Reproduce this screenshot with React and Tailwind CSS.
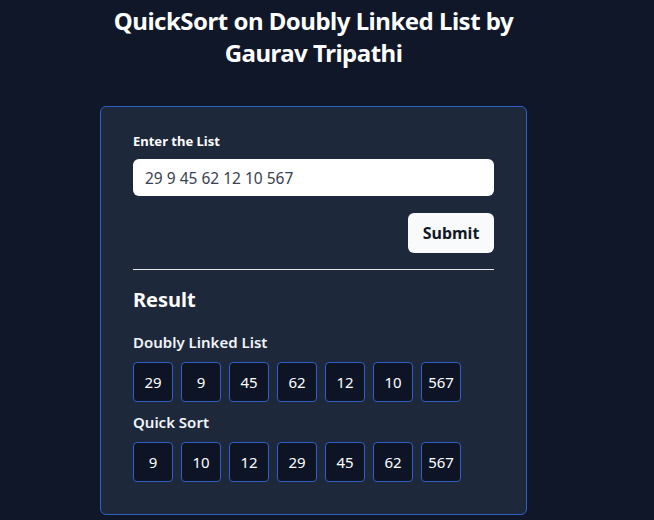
const ORIGINAL = [29, 9, 45, 62, 12, 10, 567];
const SORTED = [...ORIGINAL].sort((a, b) => a - b);

function NodeRow({ values }) {
  return (
    <div className="flex gap-2">
      {values.map((v, i) => (
        <div
          key={i}
          className="w-10 h-10 flex items-center justify-center rounded border border-[#2f5fc4] bg-[#0c1426] text-[15px] text-white"
        >
          {v}
        </div>
      ))}
    </div>
  );
}

export default function App() {
  return (
    <div className="min-h-screen bg-[#0f1729] font-['Noto_Sans',sans-serif]">
      <div className="w-[627px] flex flex-col items-center">
        <h1 className="mt-[5px] text-[24px] leading-8 font-bold tracking-[-0.5px] text-white text-center">
          QuickSort on Doubly Linked List by
          <br />
          Gaurav Tripathi
        </h1>

        <div className="mt-[37px] w-[427px] rounded-md border border-[#2f5fc4] bg-[#1e283b] px-8 pt-6 pb-8">
          {/* input form */}
          <label className="block text-[13px] leading-5 font-bold text-white">Enter the List</label>
          <input
            className="mt-2 w-full h-[37px] rounded-md bg-white px-3 text-[15.5px] text-[#374151] outline-none"
            defaultValue="29 9 45 62 12 10 567"
          />
          <div className="flex justify-end mt-[17px]">
            <button className="h-10 w-[86px] rounded-md bg-[#f8fafc] text-[16px] font-bold text-[#111827]">
              Submit
            </button>
          </div>
          <hr className="mt-4 border-t border-[#e5e7eb]" />

          {/* result */}
          <h2 className="mt-4 text-[20px] leading-7 font-bold text-white">Result</h2>
          <h3 className="mt-4 mb-2 text-[15px] leading-6 font-semibold text-[#f1f5f9]">Doubly Linked List</h3>
          <NodeRow values={ORIGINAL} />
          <h3 className="mt-2 mb-2 text-[15px] leading-6 font-semibold text-[#f1f5f9]">Quick Sort</h3>
          <NodeRow values={SORTED} />
        </div>
      </div>
    </div>
  );
}
